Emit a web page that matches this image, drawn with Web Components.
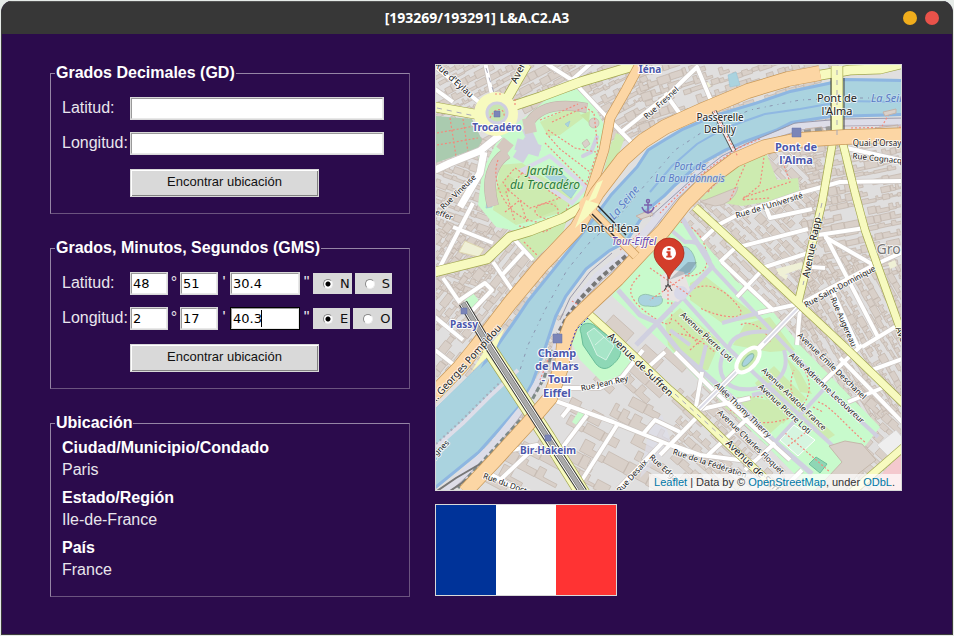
<!DOCTYPE html>
<html lang="es">
<head>
<meta charset="utf-8">
<title>[193269/193291] L&amp;A.C2.A3</title>
<style>
  html { height: 100%; background: #e6ebe8; }
  body { margin: 0; min-height: 100%; box-sizing: border-box; padding: 1px; display: flex; font-family: "Liberation Sans", Arial, sans-serif; color: #fff; }
</style>
</head>
<body>
<app-window heading="[193269/193291] L&amp;A.C2.A3">
  <group-box slot="side" heading="Grados Decimales (GD)">
    <decimal-form></decimal-form>
  </group-box>
  <group-box slot="side" heading="Grados, Minutos, Segundos (GMS)">
    <dms-form></dms-form>
  </group-box>
  <group-box slot="side" heading="Ubicación">
    <place-info city="Paris" region="Ile-de-France" country="France"></place-info>
  </group-box>
  <street-map slot="main"></street-map>
  <country-flag slot="main"></country-flag>
</app-window>

<script>
const define = (name, render) => customElements.define(name, class extends HTMLElement {
  constructor() { super(); this.attachShadow({ mode: 'open' }); }
  connectedCallback() { this.shadowRoot.innerHTML = render(this); }
});

const esc = s => (s || '').replace(/&/g, '&amp;').replace(/</g, '&lt;');

define('app-window', el => `
<style>
  :host { flex: 1; display: flex; flex-direction: column; box-sizing: border-box; border: 1px solid #3b3b3b; border-top: 0; border-radius: 11px 11px 0 0; background: #2b0b4c; overflow: hidden; }
  header { display: grid; grid-template-columns: 1fr auto 1fr; align-items: center; height: 33px; box-sizing: border-box; padding: 0 13px; background: #373737; border-top: 1px solid #555; }
  h1 { grid-column: 2; margin: 0; font: bold 14px/20px "Noto Sans", sans-serif; color: #fff; }
  .buttons { display: flex; gap: 8px; justify-content: flex-end; }
  button { width: 14px; height: 14px; padding: 0; border: 0; border-radius: 50%; background: #f0ad1c; }
  button + button { background: #e9524a; }
  main { flex: 1; display: grid; grid-template-columns: 360fr 467fr; gap: 25px; align-items: start; padding: 30px 50px 30px 48px; }
  .side { display: flex; flex-direction: column; gap: 25px; }
  .main { display: flex; flex-direction: column; gap: 13px; }
</style>
<header>
  <h1>${esc(el.getAttribute('heading'))}</h1>
  <div class="buttons"><button type="button" aria-label="Minimizar"></button><button type="button" aria-label="Cerrar"></button></div>
</header>
<main>
  <div class="side"><slot name="side"></slot></div>
  <div class="main"><slot name="main"></slot></div>
</main>`);

define('group-box', el => `
<style>
  :host { display: block; }
  fieldset { margin: 0; min-width: 0; padding: 0 4px; border: 1px solid; border-color: #9585a5 #6b547f #6b547f #9585a5; }
  legend { padding: 0 1px; font: bold 16px/18px "Liberation Sans", Arial, sans-serif; }
  .body { padding: 0 7px; }
</style>
<fieldset><legend>${esc(el.getAttribute('heading'))}</legend><div class="body"><slot></slot></div></fieldset>`);

const formStyle = `
  :host { display: block; padding: 15px 0 16px; }
  form { display: grid; grid-template-columns: 68px 1fr; row-gap: 12px; align-items: center; }
  .name { padding-bottom: 2px; font-size: 16px; line-height: 21px; color: #e9e6ed; white-space: nowrap; }
  input.text { box-sizing: border-box; height: 23px; min-width: 0; padding: 0 1px; border: 2px solid; border-color: #9a9a9a #e8e8e8 #e8e8e8 #9a9a9a; outline: 1px solid #d9d9d9; outline-offset: -1px; border-radius: 0; background: #fff; color: #000; font: 13px "DejaVu Sans", sans-serif; }
  button { grid-column: 2; justify-self: start; width: 189px; height: 28px; margin-top: 2px; padding: 0 0 3px; border: 1px solid #d9d9d9; border-radius: 0; box-shadow: inset 1px 1px #fff, inset -1px -1px #828282; background: #d9d9d9; color: #111; font: 13px "Liberation Sans", Arial, sans-serif; }
`;

define('decimal-form', () => `
<style>${formStyle}
  input.text { width: calc(100% - 14px); }
</style>
<form>
  <label class="name" for="lat">Latitud:</label><input class="text" id="lat">
  <label class="name" for="lon">Longitud:</label><input class="text" id="lon">
  <button type="button">Encontrar ubicación</button>
</form>`);

const dmsRow = (id, name, d, m, s, a, b, active) => `
  <label class="name" for="${id}">${name}</label>
  <div class="row">
    <input class="text deg" id="${id}" value="${d}"><span class="unit">°</span>
    <input class="text deg" value="${m}" aria-label="${name} minutos"><span class="unit">'</span>
    <span class="field${active ? ' active' : ''}"><input class="text sec" value="${s}" aria-label="${name} segundos"></span><span class="unit wide">"</span>
    <span class="radios">
      <label><input type="radio" name="${id}-side" checked>${a}</label>
      <label><input type="radio" name="${id}-side">${b}</label>
    </span>
  </div>`;

define('dms-form', () => `
<style>${formStyle}
  .row { display: flex; align-items: center; }
  .deg { width: 38px; }
  .sec { width: 70px; }
  .field { position: relative; display: flex; }
  .active .sec { outline-color: #000; }
  .active::after { content: ""; position: absolute; left: 31px; top: 3px; width: 1px; height: 17px; background: #000; }
  .unit { width: 12px; flex: none; padding-bottom: 2px; text-align: center; font-size: 16px; line-height: 21px; color: #e9e6ed; }
  .unit.wide { width: 13px; }
  .radios { display: flex; gap: 3px; }
  .radios label { display: flex; align-items: center; height: 21px; padding: 0 2px 0 10px; background: #d9d9d9; color: #111; font: 13px "DejaVu Sans", sans-serif; }
  input[type=radio] { appearance: none; width: 10px; height: 10px; margin: 0 7px 0 0; border: 1px solid; border-color: #888 #eee #eee #888; border-radius: 50%; background: #fff; }
  input[type=radio]:checked { background: radial-gradient(circle, #000 0 2px, #fff 3px); }
</style>
<form>
  ${dmsRow('lat', 'Latitud:', '48', '51', '30.4', 'N', 'S', false)}
  ${dmsRow('lon', 'Longitud:', '2', '17', '40.3', 'E', 'O', true)}
  <button type="button">Encontrar ubicación</button>
</form>`);

define('place-info', el => `
<style>
  :host { display: block; padding: 5px 0 15px; }
  dl { display: flex; flex-direction: column; gap: 6px; margin: 0; font-size: 16px; line-height: 22px; }
  dt { font-weight: bold; }
  dd { margin: 0; color: #e9e6ed; }
</style>
<dl>
  <div><dt>Ciudad/Municipio/Condado</dt><dd>${esc(el.getAttribute('city'))}</dd></div>
  <div><dt>Estado/Región</dt><dd>${esc(el.getAttribute('region'))}</dd></div>
  <div><dt>País</dt><dd>${esc(el.getAttribute('country'))}</dd></div>
</dl>`);

define('country-flag', () => `
<style>
  :host { display: grid; grid-template-columns: repeat(3, 60px); grid-template-rows: 90px; align-self: flex-start; border: 1px solid #d9d9d9; }
  i:nth-of-type(1) { background: #039; }
  i:nth-of-type(2) { background: #fff; }
  i:nth-of-type(3) { background: #f33; }
</style>
<i></i><i></i><i></i>`);

/* ---- map drawing ---- */
let seed = 11;
const rnd = () => (seed = (seed * 16807) % 2147483647) / 2147483647;

// Building footprints on a jittered grid turned by `deg` round the middle of the box.
function buildings(x0, y0, x1, y1, deg, w, h, fill) {
  const cx = (x0 + x1) / 2, cy = (y0 + y1) / 2, R = Math.hypot(x1 - x0, y1 - y0) / 2;
  const c = Math.cos(deg * Math.PI / 180), s = Math.sin(deg * Math.PI / 180);
  let d = '';
  for (let v = -R, row = 0; v < R; v += h, row++) {
    for (let u = -R; u < R;) {
      const bw = w * (.5 + rnd());
      if (rnd() < fill) {
        const t = v + rnd() * 2, b = v + h - (row % 3 == 2 ? 3 : .4) - rnd() * 2, r = u + bw - .5;
        const n = u + bw * (.3 + rnd() * .3), k = t + (b - t) * (.3 + rnd() * .4);
        const pts = rnd() < .45 ? [[u, t], [r, t], [r, b], [u, b]] : [[u, t], [n, t], [n, k], [r, k], [r, b], [u, b]];
        const q = pts.map(([a, e]) => [cx + a * c - e * s, cy + a * s + e * c]);
        if (q.every(([a, e]) => a >= x0 - 6 && a <= x1 + 6 && e >= y0 - 6 && e <= y1 + 6))
          d += 'M' + q.map(p => p.map(z => z.toFixed(1)).join(' ')).join('L') + 'Z';
      }
      u += bw;
    }
  }
  return `<path class="bld" d="${d}"/>`;
}

const road = (cls, w, list) => list.map(d => `<path class="${cls} case" stroke-width="${w + 1.4}" d="${d}"/>`).join('') +
  list.map(d => `<path class="${cls}" stroke-width="${w}" d="${d}"/>`).join('');
const label = (cls, x, y, size, text, rot) =>
  `<text class="${cls}" font-size="${size}" text-anchor="middle" transform="translate(${x} ${y})${rot ? ` rotate(${rot})` : ''}">${text}</text>`;

const river = 'M905 79L843 78 828 82 790 90 755 102 715 114 682 128 665 138 647 149 636 166 610 194 593 217 577 238 557 263 527 300 517 315 487 358 430 414V494L437 488 480 453 520 408 533 385 547 347 557 317 567 297 587 270 610 252 627 243 647 212 665 197 675 187 698 167 725 152 745 143 778 131 792 124 830 118 905 116Z';
const northQuay = 'M820 73L788 79 748 91 705 109 665 127 643 141 623 159 597 193 577 228 540 267 510 303 477 346 460 367 430 398';
const southQuay = 'M905 135L845 137 798 140 765 147 735 160 708 180 685 203 663 231 643 251 617 279 587 307 572 322 564 343 562 365 550 398 527 425 497 458 465 492';
const metro = 'M463 303L490 348 548 438 583 492';

const drawing = () => `
<defs><clipPath id="rv"><path d="${river}"/></clipPath></defs>
<rect x="430" y="60" width="480" height="440" fill="#e0dfdf"/>
${buildings(435, 64, 650, 145, -28, 10, 9, .92)}
${buildings(640, 64, 840, 130, -18, 11, 10, .8)}
${buildings(435, 140, 490, 300, 20, 9, 9, .92)}
${buildings(435, 225, 560, 375, -52, 10, 9, .92)}
${buildings(690, 125, 820, 345, 45, 9, 9, .93)}
${buildings(805, 145, 902, 275, -12, 10, 9, .93)}
${buildings(798, 260, 902, 420, 60, 8, 8, .97)}
${buildings(480, 400, 665, 491, 28, 18, 15, .75)}
${buildings(590, 320, 690, 400, 42, 20, 16, .75)}
${buildings(675, 385, 902, 491, 42, 11, 10, .88)}

<g fill="#aacbaf"><path d="M435 116L472 119 482 140 478 148 435 163Z"/></g>
<path class="ped" d="M437 133L480 125M437 145L478 138M450 118L456 156M463 119L468 152"/>
<path fill="#eff0d6" stroke="#ded6b0" d="M465 241L484 249 479 257 459 252Z"/>
<path fill="#c8facc" d="M528 115L548 98 577 89 592 103 605 126 601 150 588 190 575 212 516 231 496 227 478 205 482 172 500 135Z"/>
<path fill="#cdebb0" d="M516 239L567 219 563 233 533 261ZM540 122L575 105 583 118 560 135 548 136ZM500 165L522 163 573 197 564 212 516 225 493 210ZM612 140L618 145 605 180 600 185ZM616 133L625 137 615 164 605 166Z"/>
<path fill="#c8e6a5" d="M496 190L508 175 517 181 507 196ZM535 207L555 200 559 209 540 217ZM580 115L590 111 589 123Z"/>
<path class="lil" stroke-width="12" d="M516 144L540 151M530 140L518 160"/>
<path class="lil" stroke-width="9" d="M526 128L537 152"/>
<path fill="none" stroke="#d9d9e8" stroke-width="4" d="M522 170L550 156 586 187 572 203Z"/>
<path fill="#aad3df" stroke="#99c4d6" stroke-width=".6" d="M543 174L553 166 578 188 571 198ZM487 201L493 199 492 207 486 208ZM565 124L570 121 568 127ZM728 75L736 72 740 85 730 87Z"/>
<path fill="none" stroke="#bfb0a5" stroke-width="10" d="M528 125C536 109 555 102 587 108"/>
<path class="bb" stroke-width="9" d="M528 125C536 109 555 102 587 108"/>
<path fill="none" stroke="#bfb0a5" stroke-width="12" d="M507 153C492 163 486 181 493 206"/>
<path class="bb" stroke-width="12" d="M528 118L531 133M500 142L510 150"/>
<path class="bb" stroke-width="11" d="M507 153C492 163 486 181 493 206"/>
<circle cx="594" cy="123" r="5" class="bld"/><path class="bld" d="M582 143l5-4 3 5-5 4z"/>
<path stroke="#cfcfe0" stroke-width="4" fill="none" stroke-linecap="round" d="M583 156L591 152 597 137"/>
<path class="ped" d="M546 133L560 149 590 172M548 130L575 148 596 152M552 122L585 107 594 113 598 150 586 185M540 120L560 112 578 104M498 160C490 180 505 215 532 221S565 212 570 203M508 190L530 208 560 198 540 185 515 168 503 182ZM505 212L520 200 527 222M545 143L590 188M522 173L506 192 515 222M519 226L545 232 560 222M535 212C535 202 555 200 558 210S540 222 535 212M524 242L537 255"/>

<path fill="#c8facc" d="M669 211L680 214 712 252 735 280 770 308 800 345 880 427 862 450 812 492 765 444 698 380 670 350 640 322 612 296 628 266 650 250Z"/>
<path fill="#cdebb0" d="M690 283L705 276 732 297 760 318 722 323 690 300ZM665 321L680 308 720 342 708 370 690 370 668 345ZM733 345L745 324 770 317 795 350 770 352ZM755 383L774 366 806 398 783 424ZM786 357L800 372 812 394 800 392ZM718 402L748 396 775 402 785 420 765 438ZM802 404L835 435 825 441 795 415Z"/>
<path fill="#d6f5e0" stroke="#fff" d="M780 440L794 425 815 440 798 456Z"/>
<path fill="#8fd6b5" stroke="#6cbf9b" d="M809 464L816 457 827 464 820 473Z"/>
<path fill="#aad3df" stroke="#96c5b0" d="M640 296C648 291 652 299 661 296 666 304 657 308 648 306 640 307 636 301 640 296ZM681 247C688 244 696 254 696 267 690 276 681 279 673 278Z"/>
<path class="ped" d="M669 219C690 222 705 235 707 256S690 277 680 275M640 275C630 285 622 295 650 315S670 317 672 300M690 290C710 280 725 290 738 306S720 318 700 308M669 335C690 330 705 345 715 352M690 350L712 330M675 320L700 345M741 325C745 320 765 325 770 342M725 398C745 400 755 394 764 398M730 410C745 420 760 428 790 418M792 357C812 372 812 390 805 402S785 390 794 370M818 402C830 405 845 425 866 443M785 433L830 472M788 446L806 432M813 407l10 5"/>
<path class="lil" stroke-width="5" d="M682 218L712 267 636 345M618 290L640 315 656 322 680 352 735 400 775 442 812 474"/>
<path class="lil" stroke-width="4" d="M650 212L685 242C700 240 705 250 710 262M668 285L682 297 725 345 755 374 833 446M712 267L785 345 825 388 878 437M722 323L758 313M729 347C732 335 750 330 770 332M775 442L825 388M670 330L690 345M706 345L700 370M725 350C714 372 724 392 752 389S790 370 784 350M752 395L775 390"/>
<path fill="#e8e3e3" d="M660 277L669 269 684 272 690 290 678 302 662 298Z"/><circle cx="681" cy="293" r="7" fill="#d9d9e8"/>
<path class="ped" stroke-width="4" d="M650 268L692 297M690 273L650 300M668 290V306"/>
<path fill="#d9d0c9" stroke="#c5b8ab" d="M845 441L862 444 876 460 858 474 845 491H815L842 462 829 446Z"/>
<path fill="#f4c9ce" d="M880 476L902 452V491H880Z"/>
<path fill="#eee" stroke="#ccc" stroke-width=".5" d="M877 445L896 430 902 437V448L888 456Z"/>
<path fill="#eff0d6" d="M776 269L802 262 803 268 780 276ZM888 263L895 260 897 266 890 269ZM777 273L788 275 786 280ZM704 84L708 82 711 86 707 89Z"/>

<path fill="#c8facc" d="M465 300L473 293 480 302 470 309ZM567 333L582 318 590 319 636 355 622 375 603 383 580 360ZM572 422L580 409 587 414 578 426ZM478 157L484 156 483 170Z"/>
<path fill="#cdebb0" d="M722 180L739 163 765 150 777 180 798 178 800 196 742 206 700 199Z"/>
<path class="bld" d="M738 187A24 24 0 0 1 715 206L700 202Z"/>
<path class="ped" d="M708 192C730 165 745 160 765 152M745 165L730 200M765 150L760 185 742 200 770 198M780 155L790 182 742 198"/>
<path fill="#dddde8" d="M650 424L662 415 672 445 640 478Z" opacity=".7"/>

${road('wh', 4, [
'M437 68L480 103', 'M485 62L492 95', 'M547 64L572 80 603 113 633 144', 'M435 89L453 102', 'M620 133L670 93 697 67 712 103', 'M665 93L680 114',
'M572 80L590 64', 'M473 203L440 267', 'M443 278L460 303', 'M453 227L493 243', 'M513 238L533 260', 'M493 262L512 290', 'M525 250L502 275', 'M460 300L485 283 492 290 470 313',
'M435 317L463 340', 'M435 350L458 368', 'M702 240L718 225 745 211 765 205 800 193 840 182 905 181', 'M765 205L770 218 812 209', 'M842 147L905 161', 'M720 262L735 248 808 229',
'M737 297L765 267 808 253', 'M722 262L774 311', 'M758 313L798 304', 'M818 235L865 228', 'M825 235L878 337', 'M825 237L877 267', 'M802 303L872 266 905 251', 'M812 267L825 268', 'M832 290L858 347', 'M862 347L905 321',
'M800 308L797 345', 'M820 385L848 358 862 345', 'M840 358L905 425', 'M848 402L882 388', 'M675 352L715 392 790 460', 'M702 372L695 412', 'M702 409L750 398', 'M665 352L645 370',
'M553 400L613 422 670 445 690 453', 'M555 388L600 388 622 377 643 350', 'M617 425L582 480', 'M587 415L553 460', 'M570 407L562 417', 'M498 482L537 445 512 450', 'M487 472L522 492', 'M663 442L617 490', 'M643 434L655 420 680 432', 'M699 415L660 455', 'M748 418L708 455', 'M672 445L700 455 755 462', 'M775 443L745 470', 'M802 470L790 482', 'M872 370L905 358'])}
${road('wh', 7, ['M435 170L450 163 480 151 500 135', 'M484 152L480 173 460 207'])}
${road('wh', 5, ['M699 409L737 371 799 307'])}
<path fill="none" stroke="#dddde8" stroke-width="2" d="M699 409L737 371M764 343L799 307"/>
<ellipse cx="748" cy="360" rx="15" ry="8" transform="rotate(-48 748 360)" fill="#cdebb0" stroke="#fff" stroke-width="4"/>
<ellipse cx="748" cy="360" rx="8" ry="3" transform="rotate(-48 748 360)" fill="#aad3df" stroke="#8ebfa6"/>

<path d="${river}" fill="#aad3df"/>
<g clip-path="url(#rv)" fill="none">
  <path d="${river}" stroke="#8eb6e1" stroke-width="6"/>
  <path d="M905 102L845 101 800 109 765 114 725 128 697 144 672 166 650 192" stroke="#8fb8e2" stroke-width="2"/>
  <path d="M485 348L475 370 432 412" stroke="#aad3df" stroke-width="9"/>
</g>
<path fill="none" stroke="#dddde8" stroke-width="7" d="M905 122L840 123 800 126 770 138 730 154 700 172 675 196 652 224 625 255 598 275 575 302 563 326 555 350M545 370L525 405 492 446 445 492"/>
<path fill="none" stroke="#b5aebc" stroke-width="1" d="M905 125L842 126 800 130 770 140 730 158 702 176 676 200 654 228 628 258 602 280 578 306 566 326M540 384L525 410 495 450 450 492"/>
<path fill="none" stroke="#9999ac" stroke-width="1" d="M905 118L842 119 795 123 750 142 722 156 690 181 650 217M612 253L590 272 570 298 560 320"/>
<path fill="none" stroke="#dddde8" stroke-width="4" d="M436 447L463 423 490 396 518 370"/>
<path fill="none" stroke="#a6aebd" stroke-width="2" stroke-dasharray="2 3" d="M436 444L463 419 490 392 512 371"/>
<path fill="none" stroke="#8b95b0" stroke-dasharray="3 4 1 5" d="M902 98L850 98 800 100 750 110 710 127 675 150 645 185 620 215 590 242 567 270 545 310 528 345 520 370"/>
<path fill="none" stroke="#777" stroke-width="4" stroke-dasharray="5 3" d="M626 256L600 278 580 299 567 317 558 334"/>
<path fill="none" stroke="#7f8a88" stroke-width="3" stroke-dasharray="5 3" d="M553 350L544 378 532 400M520 420L493 450 458 488"/>
<path fill="none" stroke="#777" stroke-width="2" d="M437 491L456 478 480 464M450 491L478 472"/>
<path class="ped" d="M905 127L850 128M760 139L738 148 712 166 685 188 660 213M660 203L640 220M584 308L570 300M620 250L640 233M548 360L540 380M880 130L890 112"/>
<path fill="#d9d0c9" stroke="#c3b2a8" d="M805 129L822 127 823 132 806 134ZM883 112L896 109V113L885 116ZM636 216L650 210 653 215 641 219ZM875 128L898 125V130L878 132Z"/>
<path stroke="#999" stroke-width="4" stroke-dasharray="7 4" fill="none" d="M804 132L830 128"/>

${road('ye', 9, ['M435 107L480 115', 'M510 107L540 97 580 82 627 68 645 62', 'M527 64L508 97', 'M435 272L487 259 510 237 530 231 563 218 588 203', 'M815 76L850 70 880 69 905 63'])}
${road('ye', 7, ['M695 207L745 253 798 303 845 347 905 405', 'M833 140L822 203 798 303', 'M842 140L855 193 865 230 878 267 905 342', 'M590 315L610 333 670 390 695 412 732 448 782 494', 'M905 446L852 492'])}
${road('ye', 11, ['M837 66L837 138'])}
${road('ye', 14, ['M488 347L548 438 583 494'])}
<path fill="none" stroke="#444" stroke-width="1" d="M831 78V130M844 78V130"/>
<circle cx="496" cy="114" r="22" fill="#f7fabf"/>
${road('or', 9, ['M640 64L626 90 610 118 604 150 588 200'])}
${road('or', 14, [northQuay, southQuay])}
${road('or', 8, ['M588 207L636 256'])}
<path fill="none" stroke="#2c2c2c" stroke-width="1.4" d="M598 206L626 235M592 214L620 242"/>
<circle cx="588" cy="205" r="9" fill="#fcd6a4"/>
<path fill="#f7fabf" d="M575 228L586 200 599 204 588 216ZM603 180L596 198 588 202 597 183ZM485 350L505 328 495 350 471 372Z"/>
<circle cx="497" cy="113" r="10" fill="#c8e6b0" stroke="#cfcfe0" stroke-width="3"/>
<path class="ped" stroke-width="3" d="M490 118C495 106 505 108 504 116M495 94h8M515 99v8"/>
<path fill="none" stroke="#a9a9b8" stroke-width="1" stroke-dasharray="5 5" d="M437 108L475 116M486 68L494 93M675 394L732 446 775 486M822 203L803 285M837 70V135"/>
<path fill="none" stroke="#333" stroke-width="9" d="${metro}"/><path fill="none" stroke="#fff" stroke-width="7" d="${metro}"/><path fill="none" stroke="#666" stroke-width="5" d="${metro}"/><path fill="none" stroke="#aaa" stroke-width="4" d="${metro}"/>
<path fill="none" stroke="#555" stroke-width="5" d="M714 111L734 151"/><path fill="none" stroke="#f6eeee" stroke-width="3" d="M714 111L734 151"/><path class="ped" d="M714 111L738 157"/>
<path fill="#8ed8b6" stroke="#69bd98" d="M581 333C577 325 588 320 595 326L616 342C625 350 620 359 611 366 605 371 598 368 594 361L583 345Z"/>
<path fill="#a7e5c8" stroke="#d5f3e5" d="M587 333L594 328 614 346 606 360 597 355Z"/><path stroke="#d5f3e5" d="M595 345L604 337"/>
<path fill="none" stroke="#3333c8" stroke-width="1" stroke-dasharray="2 2" d="M588 318L576 330 569 350"/>
<g fill="#7b85b8" stroke="#6570aa" stroke-width=".5"><path d="M494 111h6v6h-6zM792 128h9v9h-9zM461 308h6v6h-6zM553 334h9v9h-9zM545 435h6v6h-6z"/></g>
<g fill="none" stroke="#7b62ad" stroke-width="1.5"><circle cx="648" cy="201" r="1.5"/><path d="M648 202V213M644 205h8M642 207C643 211 645 212 648 213 651 212 653 211 654 207"/></g>

<g class="names">
${label('st', 650, 73, 10, 'Iéna')}${label('st', 497, 131, 10, 'Trocadéro')}
${label('gr', 545, 175, 12, 'Jardins')}${label('gr', 545, 189, 12, 'du Trocadéro')}
${label('bk', 720, 121, 10, 'Passerelle')}${label('bk', 720, 133, 10, 'Debilly')}
${label('bk', 837, 102, 11, 'Pont de')}${label('bk', 837, 115, 11, "l'Alma")}
${label('st', 796, 151, 11, 'Pont de')}${label('st', 796, 164, 11, "l'Alma")}
${label('wa', 891, 102, 11, 'La Seine')}${label('wa', 627, 205, 11, 'La Seine', -50)}
${label('wa', 690, 170, 10, 'Port de')}${label('wa', 690, 182, 10, 'La Bourdonnais')}
${label('bk', 610, 232, 11, "Pont d'Iéna")}${label('pu', 634, 245, 10, 'Tour-Eiffel')}
${label('st', 464, 328, 10, 'Passy')}
${label('st', 557, 357, 11, 'Champ')}${label('st', 557, 370, 11, 'de Mars')}${label('st', 557, 383, 11, '- Tour')}${label('st', 557, 397, 11, 'Eiffel')}
${label('st', 548, 454, 10, 'Bir-Hakeim')}
${label('bk', 452, 82, 9, "Rue d'Eylau", 42)}${label('bk', 524, 68, 10, 'Avenue', -65)}
${label('bk', 663, 105, 8, 'Rue Fresnel', -42)}${label('bk', 460, 194, 8, 'Rue Vineuse', -44)}${label('bk', 437, 215, 8, 'Scheffer', 20)}
${label('bk', 877, 146, 8, "Quai d'Orsay")}${label('bk', 877, 161, 8, 'Rue Cognacq', 6)}
${label('bk', 770, 208, 8, "Rue de l'Université", -17)}
${label('bk', 815, 248, 10, 'Avenue Rapp', -79)}
${label('gy', 892, 254, 14, 'Gros')}
${label('bk', 841, 289, 8, 'Rue Saint-Dominique', -28)}${label('bk', 841, 323, 8, 'Rue Augereau', 66)}
${label('bk', 705, 339, 8, 'Avenue Pierre Loti', 43)}
${label('bk', 638, 367, 10, 'Avenue de Suffren', 44)}
${label('bk', 605, 386, 8, 'Rue Jean Rey', -12)}
${label('bk', 830, 368, 8, 'Avenue Émile Deschanel', 44)}
${label('bk', 825, 390, 8, 'Allée Adrienne Lecouvreur', 43)}
${label('bk', 792, 401, 8, 'Avenue Anatole France', 44)}
${label('bk', 783, 411, 8, 'Avenue Pierre Loti', 43)}
${label('bk', 741, 412, 8, 'Allée Thomy Thierry', 44)}
${label('bk', 749, 444, 8, 'Avenue Charles Floquet', 44)}
${label('bk', 756, 474, 10, 'Avenue de Suffren', 44)}
${label('bk', 709, 466, 8, 'Rue de la Fédération', 18)}
${label('bk', 634, 478, 8, 'Rue Desaix', -48)}${label('bk', 663, 471, 8, 'Rue Edgar', 42)}
${label('bk', 510, 488, 8, 'Rue du Docteur', 20)}
${label('bk', 468, 366, 10, '... Georges Pompidou', -48)}
${label('bk', 440, 453, 8, 'Cygnes', -45)}${label('bk', 901, 343, 9, 'Avenue', 70)}
</g>

<path d="M669 280L688 262 697 262 690 272Z" fill="#345" opacity=".25"/>
<path stroke="#444" fill="none" d="M668 275V284L664 291M668 284L672 291M665 286h6"/>
<path fill="#d33d2a" stroke="#a92c1c" stroke-width=".8" d="M669 279C666 268 654 265 654 253A15 15 0 0 1 684 253C684 265 672 268 669 279Z"/>
<circle cx="669" cy="253" r="7" fill="#fff"/>
<path fill="#d33d2a" d="M667.500 248h3v2.200h-3zM666.500 251.300h4v4.500h1.200v1.700h-5.400v-1.700h1.300v-2.900h-1.100z"/>`;

define('street-map', () => `
<style>
  :host { display: block; position: relative; border: 1px solid #d9d9d9; overflow: hidden; }
  svg { display: block; width: 100%; height: auto; }
  path.bld, circle.bld { fill: #d9d0c9; stroke: #c2b4aa; stroke-width: .7; }
  .bb { fill: none; stroke: #d5c8c0; }
  .lil { fill: none; stroke: #d0d0e0; }
  .ped { fill: none; stroke: #f3897c; stroke-width: 1.2; stroke-dasharray: 2 2; }
  .wh, .ye, .or { fill: none; stroke-linejoin: round; }
  .wh { stroke: #fff; } .wh.case { stroke: #ccc6c2; }
  .ye { stroke: #f7fabf; } .ye.case { stroke: #a4a850; }
  .or { stroke: #fcd6a4; } .or.case { stroke: #c99a5a; }
  .names { font-family: "Noto Sans", sans-serif; paint-order: stroke; stroke: rgba(255,255,255,.75); stroke-width: 2px; stroke-linejoin: round; }
  text { paint-order: stroke; fill: #222; }
  .st { fill: #4c57ab; font-weight: bold; stroke: #fff; }
  .gr { fill: #2a7d3c; font-style: italic; stroke: rgba(220,245,205,.8); }
  .wa { fill: #5b7bc5; font-style: italic; stroke: rgba(200,225,240,.6); }
  .pu { fill: #6546b0; font-style: italic; }
  .gy { fill: #777; }
  p { position: absolute; right: 0; bottom: 0; margin: 0; padding: 0 6px 0 5px; background: rgba(255,255,255,.7); color: #333; font: 11px/16px "Liberation Sans", Arial, sans-serif; white-space: nowrap; }
  a { color: #0078a8; text-decoration: none; }
</style>
<svg viewBox="436 65 465 425" role="img" aria-label="Mapa de París">${drawing()}</svg>
<p><a href="#leaflet">Leaflet</a> | Data by © <a href="#osm">OpenStreetMap</a>, under <a href="#odbl">ODbL</a>.</p>`);
</script>
</body>
</html>
